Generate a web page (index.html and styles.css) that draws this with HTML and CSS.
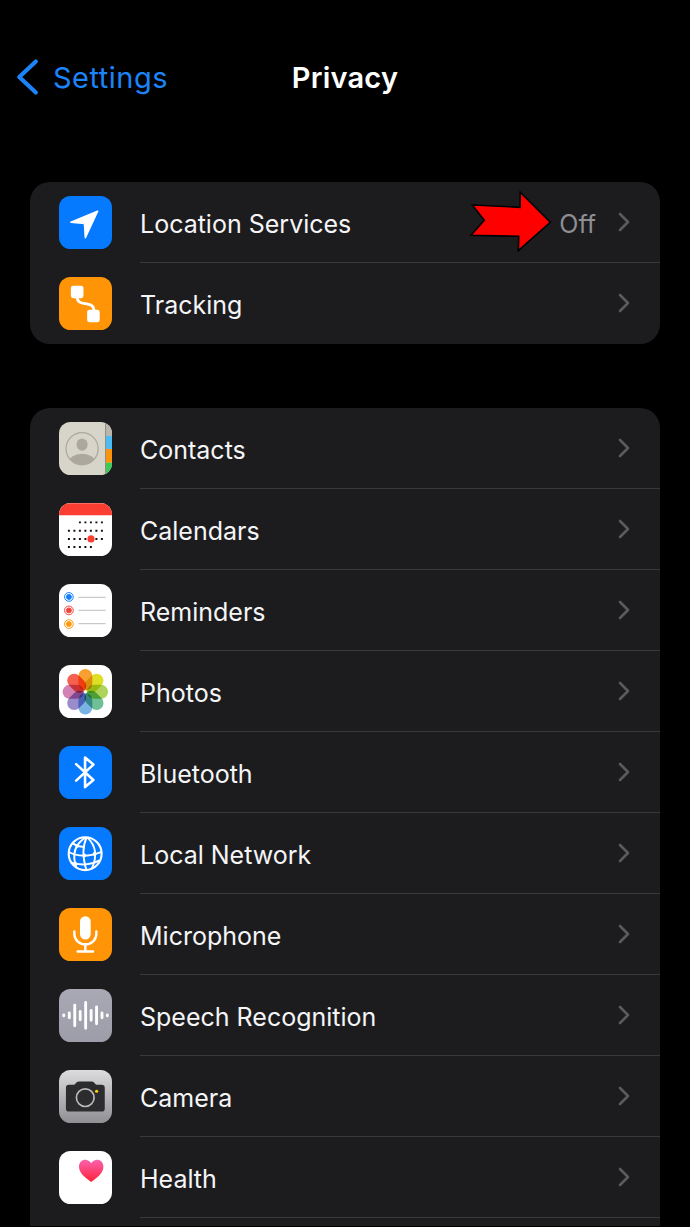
FILE: index.html
```html
<!DOCTYPE html>
<html lang="en">
<head>
    <meta charset="UTF-8">
    <meta name="viewport" content="width=device-width, initial-scale=1.0">
    <title>Privacy</title>
    <link rel="stylesheet" href="styles.css">
</head>
<body>
    <!-- Shared shapes -->
    <svg class="defs" width="0" height="0">
        <symbol id="chevron" viewBox="0 0 14 22">
            <path d="M3 3l8 8-8 8" fill="none" stroke="currentColor" stroke-width="2.6" stroke-linecap="round" stroke-linejoin="round"/>
        </symbol>
    </svg>

    <header class="navbar">
        <a class="back" href="#">
            <svg class="back-icon" viewBox="0 0 24 38"><path d="M20.8 3.500L4.300 19l16.500 15.500" fill="none" stroke="currentColor" stroke-width="4.200" stroke-linecap="round" stroke-linejoin="round"/></svg>
            <span>Settings</span>
        </a>
        <h1 class="title">Privacy</h1>
    </header>

    <main>
        <section class="group">
            <a class="row" href="#">
                <svg class="icon blue" viewBox="0 0 53.5 53.5"><path d="M39 15L12 26.2l13.7 1.3L26.6 41.8z" fill="#fff" stroke="#fff" stroke-width="1.6" stroke-linejoin="round"/></svg>
                <div class="cell">
                    <span class="label">Location Services</span>
                    <span class="value">Off</span>
                    <svg class="chevron"><use href="#chevron"/></svg>
                </div>
                <svg class="pointer" viewBox="0 0 86 64"><path d="M5.3 15L53 17.3l.3-15L83.3 32.3 51.3 60.7l.4-14.4L4 45.3l13.3-15z" fill="#f00" stroke="#000" stroke-width="1.6"/></svg>
            </a>
            <a class="row" href="#">
                <svg class="icon orange" viewBox="0 0 53.5 53.5">
                    <path d="M18.3 20c0 11 17 2 17 14" fill="none" stroke="#fff" stroke-width="2.8"/>
                    <rect x="12" y="8.5" width="12.7" height="12.7" rx="2.4" fill="#fff"/>
                    <rect x="28.4" y="32.8" width="12.7" height="12.7" rx="2.4" fill="#fff"/>
                </svg>
                <div class="cell">
                    <span class="label">Tracking</span>
                    <svg class="chevron"><use href="#chevron"/></svg>
                </div>
            </a>
        </section>

        <section class="group group-cut">
            <a class="row" href="#">
                <svg class="icon contacts" viewBox="0 0 53.5 53.5">
                    <clipPath id="face"><circle cx="23.3" cy="26.7" r="16"/></clipPath>
                    <path d="M47 0h8v14h-8z" fill="#b9b6ae"/>
                    <path d="M47 14h8v13h-8z" fill="#4cbcf5"/>
                    <path d="M47 27h8v14h-8z" fill="#fc930a"/>
                    <path d="M47 41h8v13h-8z" fill="#3ccb58"/>
                    <path d="M47 0v54" stroke="#8f8c84" stroke-width="1"/>
                    <circle cx="23.3" cy="26.7" r="16.2" fill="none" stroke="#aca89d" stroke-width="1.3"/>
                    <ellipse cx="23.3" cy="22.6" rx="5.6" ry="6.2" fill="#aca89d"/>
                    <ellipse cx="23.3" cy="41" rx="13.5" ry="9.3" fill="#aca89d" clip-path="url(#face)"/>
                </svg>
                <div class="cell">
                    <span class="label">Contacts</span>
                    <svg class="chevron"><use href="#chevron"/></svg>
                </div>
            </a>
            <a class="row" href="#">
                <svg class="icon white" viewBox="0 0 53.5 53.5">
                    <path d="M0 0h54v12H0z" fill="#fc3d31"/>
                    <g stroke="#111" stroke-width="2" stroke-dasharray="2 3.55">
                        <path d="M20.1 19.3h25"/>
                        <path d="M9 27.7h36.5"/>
                        <path d="M9 36h36.5"/>
                        <path d="M9 44.2h25"/>
                    </g>
                    <circle cx="32.3" cy="36" r="3.6" fill="#fc3d31"/>
                </svg>
                <div class="cell">
                    <span class="label">Calendars</span>
                    <svg class="chevron"><use href="#chevron"/></svg>
                </div>
            </a>
            <a class="row" href="#">
                <svg class="icon white" viewBox="0 0 53.5 53.5">
                    <g stroke-width="1">
                        <g fill="#147efb" stroke="#147efb"><circle cx="10" cy="12.8" r="4.4" fill="none"/><circle cx="10" cy="12.8" r="2.5"/></g>
                        <g fill="#f1453d" stroke="#f1453d"><circle cx="10" cy="26.4" r="4.4" fill="none"/><circle cx="10" cy="26.4" r="2.5"/></g>
                        <g fill="#fd9a0c" stroke="#fd9a0c"><circle cx="10" cy="40.2" r="4.4" fill="none"/><circle cx="10" cy="40.2" r="2.5"/></g>
                    </g>
                    <path d="M19.7 13.2H47M19.7 26.3H47M19.7 39.8H47" stroke="#bbb" stroke-width="1"/>
                </svg>
                <div class="cell">
                    <span class="label">Reminders</span>
                    <svg class="chevron"><use href="#chevron"/></svg>
                </div>
            </a>
            <a class="row" href="#">
                <svg class="icon white photos" viewBox="0 0 53.5 53.5">
                    <g transform="translate(26.6 26.8)">
                        <rect class="petal" fill="#f9a130" transform="rotate(0)"/>
                        <rect class="petal" fill="#dfdf28" transform="rotate(45)"/>
                        <rect class="petal" fill="#afd45c" transform="rotate(90)"/>
                        <rect class="petal" fill="#6fc096" transform="rotate(135)"/>
                        <rect class="petal" fill="#78b3e4" transform="rotate(180)"/>
                        <rect class="petal" fill="#9a8cca" transform="rotate(225)"/>
                        <rect class="petal" fill="#d283b4" transform="rotate(270)"/>
                        <rect class="petal" fill="#f5604f" transform="rotate(315)"/>
                    </g>
                </svg>
                <div class="cell">
                    <span class="label">Photos</span>
                    <svg class="chevron"><use href="#chevron"/></svg>
                </div>
            </a>
            <a class="row" href="#">
                <svg class="icon blue" viewBox="0 0 53.5 53.5"><path d="M17.3 18l17.4 16-8.4 7.2V11.3l8.4 7.2-17.4 16.2" fill="none" stroke="#fff" stroke-width="2.6" stroke-linecap="round" stroke-linejoin="round"/></svg>
                <div class="cell">
                    <span class="label">Bluetooth</span>
                    <svg class="chevron"><use href="#chevron"/></svg>
                </div>
            </a>
            <a class="row" href="#">
                <svg class="icon blue" viewBox="0 0 53.5 53.5">
                    <g fill="none" stroke="#fff" stroke-width="1.9">
                        <circle cx="26.4" cy="26.7" r="16.6" stroke-width="2.2"/>
                        <path d="M27 10.2C16 17 13 28 17.5 41"/>
                        <path d="M28 10.2C23 20 24 31 27.500 43"/>
                        <path d="M28.500 10.2C38 19 38.500 30 33 42"/>
                        <path d="M13.500 16C20 20 24 20 26 19.500"/>
                        <path d="M9.800 25C18 29.500 29 30 42.500 25"/>
                        <path d="M12 35.500C21 39 33 38 41 33.500"/>
                    </g>
                    <g fill="#fff">
                        <circle cx="18.500" cy="18.800" r="1.9"/><circle cx="25.500" cy="28.500" r="1.9"/><circle cx="35.800" cy="27" r="1.9"/><circle cx="16.800" cy="37" r="1.9"/>
                    </g>
                </svg>
                <div class="cell">
                    <span class="label">Local Network</span>
                    <svg class="chevron"><use href="#chevron"/></svg>
                </div>
            </a>
            <a class="row" href="#">
                <svg class="icon orange" viewBox="0 0 53.5 53.5">
                    <rect x="21.2" y="8" width="10.8" height="23.6" rx="5.4" fill="#fff"/>
                    <path d="M15.5 23.5v2.5a11.1 10.4 0 0 0 22.2 0v-2.5M26.6 36.5v7M18.8 43.6h15.6" fill="none" stroke="#fff" stroke-width="2.4" stroke-linecap="round"/>
                </svg>
                <div class="cell">
                    <span class="label">Microphone</span>
                    <svg class="chevron"><use href="#chevron"/></svg>
                </div>
            </a>
            <a class="row" href="#">
                <svg class="icon gray" viewBox="0 0 53.5 53.5"><path d="M4.8 26v.8M10.4 24v4.8M15.9 16v20.8M21.4 22.4v8.4M26.9 13.4v26M32.4 21.5v9.8M37.9 17.8v17M43.4 24v4.8M48.8 26v.8" stroke="#fff" stroke-width="2.9" stroke-linecap="round"/></svg>
                <div class="cell">
                    <span class="label">Speech Recognition</span>
                    <svg class="chevron"><use href="#chevron"/></svg>
                </div>
            </a>
            <a class="row" href="#">
                <svg class="icon camera" viewBox="0 0 53.5 53.5">
                    <path d="M10 14.7h4.5c2.5 0 2.5-3.3 5.5-3.3h13c3 0 3 3.3 5.500 3.3H43q3.2 0 3.2 3.2v20.6q0 3.2-3.2 3.2H10.2Q7 41.7 7 38.500V17.9q0-3.2 3-3.2z" fill="#2c2c2e"/>
                    <circle cx="26.5" cy="27.7" r="8.9" fill="none" stroke="#b9b9bb" stroke-width="1.7"/>
                    <circle cx="38" cy="21.2" r="1.6" fill="#fbd709"/>
                </svg>
                <div class="cell">
                    <span class="label">Camera</span>
                    <svg class="chevron"><use href="#chevron"/></svg>
                </div>
            </a>
            <a class="row" href="#">
                <svg class="icon white" viewBox="0 0 53.5 53.5">
                    <linearGradient id="heart" x1="0" y1="0" x2="0" y2="1">
                        <stop offset="0" stop-color="#fb62b0"/>
                        <stop offset="1" stop-color="#fe2237"/>
                    </linearGradient>
                    <path d="M32.5 31C26 26.500 20.2 21.500 20.2 15.6c0-8.2 9-9.2 12.3-3.4 3.3-5.8 12.3-4.8 12.3 3.4 0 5.9-5.8 10.9-12.3 15.4z" fill="url(#heart)"/>
                </svg>
                <div class="cell">
                    <span class="label">Health</span>
                    <svg class="chevron"><use href="#chevron"/></svg>
                </div>
            </a>
        </section>
    </main>
</body>
</html>
```

FILE: styles.css
```css
* {
    box-sizing: border-box;
}
body {
    margin: 0;
    background: #000;
    color: #f5f5f7;
    font-family: Inter, "Liberation Sans", sans-serif;
    font-size: 25px;
}
a {
    color: inherit;
    text-decoration: none;
}
.defs {
    display: block;
}
.navbar {
    display: grid;
    grid-template-columns: 1fr auto 1fr;
    align-items: center;
    height: 92px;
    margin-top: 31px;
    padding: 0 15px;
}
.back {
    display: flex;
    align-items: center;
    gap: 14px;
    color: #1c83f8;
    font-size: 29px;
    letter-spacing: 0.5px;
}
.back-icon {
    width: 24px;
    height: 38px;
}
.title {
    margin: 0;
    color: #fff;
    font-size: 29px;
    font-weight: 600;
    letter-spacing: 0.2px;
}
.group {
    margin: 59px 30px 0;
    border-radius: 20px;
    background: #1c1c1e;
}
.group + .group {
    margin-top: 64px;
}
/* list continues below the screen */
.group-cut {
    padding-bottom: 8px;
    border-radius: 20px 20px 0 0;
}
.row {
    position: relative;
    display: flex;
    align-items: center;
    height: 81px;
    padding-left: 29px;
}
.icon {
    flex: none;
    width: 53px;
    height: 53.5px;
    margin-right: 28px;
    border-radius: 11.5px;
}
.cell {
    display: flex;
    flex: 1;
    align-items: center;
    height: 81px;
    padding: 4px 29px 0 0;
    border-bottom: 1px solid #39393b;
}
.group:not(.group-cut) .row:last-child .cell {
    border-bottom-color: transparent;
}
.label {
    flex: 1;
}
.value {
    margin-right: 21px;
    color: #8e8e93;
}
.chevron {
    width: 14px;
    height: 22px;
    margin-top: -5px;
    color: #5b5b5f;
}
/* red arrow over the Off value */
.pointer {
    position: absolute;
    left: 437px;
    top: 8px;
    width: 86px;
    height: 64px;
}
.blue { background: #067aff; }
.orange { background: #ff9506; }
.white { background: #fff; }
.gray { background: linear-gradient(#a8a9b5, #9c9da8); }
.contacts { background: #d7d5c9; }
.camera { background: linear-gradient(#dcdcde, #8f8f94); }
.photos {
    isolation: isolate;
}
.petal {
    x: -7px;
    y: -23px;
    width: 14px;
    height: 21.5px;
    rx: 7px;
    mix-blend-mode: multiply;
}
```
